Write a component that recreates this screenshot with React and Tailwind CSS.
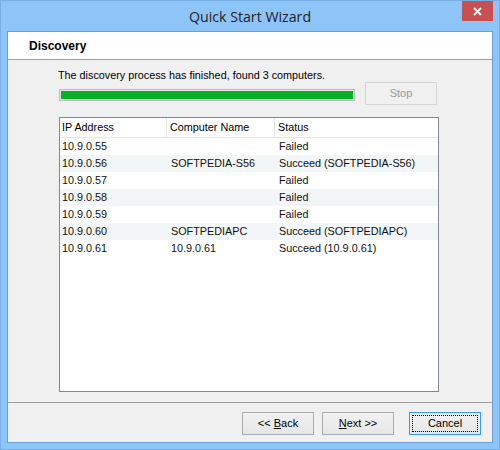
import React from "react";

const rows = [
  ["10.9.0.55", "", "Failed"],
  ["10.9.0.56", "SOFTPEDIA-S56", "Succeed (SOFTPEDIA-S56)"],
  ["10.9.0.57", "", "Failed"],
  ["10.9.0.58", "", "Failed"],
  ["10.9.0.59", "", "Failed"],
  ["10.9.0.60", "SOFTPEDIAPC", "Succeed (SOFTPEDIAPC)"],
  ["10.9.0.61", "10.9.0.61", "Succeed (10.9.0.61)"],
];

function Btn({ children, focused, disabled }) {
  return (
    <div
      className={
        "w-[72px] h-[23px] flex items-center justify-center border text-[11px] " +
        (disabled
          ? "border-[#d5d5d5] bg-[#f0f0f0] text-[#9a9a9a]"
          : focused
          ? "border-[#3399ff] bg-gradient-to-b from-[#f2f2f2] to-[#e6e6e6] text-black"
          : "border-[#acacac] bg-gradient-to-b from-[#f2f2f2] to-[#e6e6e6] text-black")
      }
    >
      {focused ? (
        <div className="w-[66px] h-[17px] border border-dotted border-black flex items-center justify-center">
          {children}
        </div>
      ) : (
        children
      )}
    </div>
  );
}

export default function App() {
  return (
    <div
      className="w-[500px] h-[450px] bg-[#8ec5f8] border border-[#76aee6] flex flex-col overflow-hidden"
      style={{ fontFamily: '"Liberation Sans", Arial, sans-serif' }}
    >
      <div className="relative h-[30px] flex items-center justify-center shrink-0">
        <span
          className="text-[14.2px] text-[#1e1e1e] mt-[1px]"
          style={{ fontFamily: '"Open Sans", "Noto Sans", sans-serif' }}
        >
          Quick Start Wizard
        </span>
        <div className="absolute right-[6px] top-0 w-[31px] h-[20px] bg-[#c75050] flex items-center justify-center">
          <svg width="9" height="9" viewBox="0 0 9 9">
            <path d="M1 1 L8 8 M8 1 L1 8" stroke="white" strokeWidth="1.8" />
          </svg>
        </div>
      </div>
      <div className="ml-[6px] w-[486px] h-[412px] border border-[#6b9fd3] flex flex-col shrink-0">
        <div className="h-[28px] bg-white border-b border-[#a0a0a0] flex items-center pl-[21px] shrink-0">
          <span className="text-[12px] font-bold text-black">Discovery</span>
        </div>
        <div className="flex-1 bg-[#f0f0f0] flex flex-col pl-[51px]">
          <div className="mt-[9px] h-[13px] leading-[13px] text-[10.8px] text-black ml-[-1px]">
            The discovery process has finished, found 3 computers.
          </div>
          <div className="flex items-center mt-[0px] h-[23px]">
            <div className="w-[296px] h-[12px] border border-[#bcbcbc] bg-[#e6e6e6] p-[1px] mt-[2px]">
              <div className="w-full h-full bg-[#06b025]" />
            </div>
            <div className="ml-[10px]">
              <Btn disabled>Stop</Btn>
            </div>
          </div>
          <div className="mt-[12px] w-[380px] h-[275px] border border-[#828790] bg-white flex flex-col">
            <div className="h-[20px] flex text-[10.8px] text-black border-b border-[#e5e5e5]">
              <div className="w-[107px] pl-[2px] flex items-center border-r border-[#e5e5e5]">IP Address</div>
              <div className="w-[108px] pl-[3px] flex items-center border-r border-[#e5e5e5]">Computer Name</div>
              <div className="flex-1 pl-[3px] flex items-center">Status</div>
            </div>
            {rows.map((r, i) => (
              <div
                key={i}
                className={
                  "h-[17px] flex items-center text-[10.8px] text-[#111] " +
                  (i % 2 === 1 ? "bg-[#f3f6f6]" : "bg-white")
                }
              >
                <div className="w-[109px] pl-[2px]">{r[0]}</div>
                <div className="w-[108px] pl-[2px]">{r[1]}</div>
                <div className="flex-1 pl-[2px]">{r[2]}</div>
              </div>
            ))}
          </div>
        </div>
        <div className="h-[40px] bg-[#f0f0f0] border-t border-[#a0a0a0] flex items-start justify-end pt-[9px] pr-[11px] shrink-0">
          <Btn>
            <span>
              &lt;&lt; <span className="underline">B</span>ack
            </span>
          </Btn>
          <div className="ml-[8px]">
            <Btn>
              <span>
                <span className="underline">N</span>ext &gt;&gt;
              </span>
            </Btn>
          </div>
          <div className="ml-[15px]">
            <Btn focused>Cancel</Btn>
          </div>
        </div>
      </div>
    </div>
  );
}
